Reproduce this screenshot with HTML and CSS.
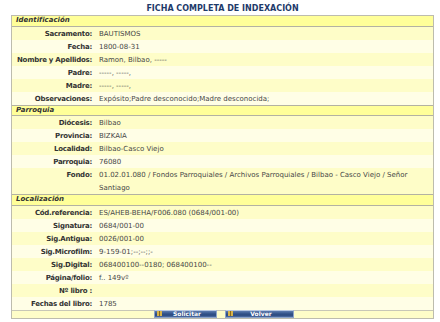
FILE: index.html
```html
<!DOCTYPE html>
<html lang="es">
<head>
<meta charset="utf-8">
<title>Ficha completa de indexación</title>
<link rel="stylesheet" href="styles.css">
</head>
<body>
<div class="page">
  <h1 class="title">FICHA COMPLETA DE INDEXACIÓN</h1>
  <table class="ficha">
    <colgroup>
      <col class="c-label">
      <col class="c-value">
    </colgroup>
    <tbody>
      <tr class="sec first"><td colspan="2">Identificación</td></tr>
      <tr class="r1"><th>Sacramento:</th><td>BAUTISMOS</td></tr>
      <tr class="r2"><th>Fecha:</th><td>1800-08-31</td></tr>
      <tr class="r1"><th>Nombre y Apellidos:</th><td>Ramon, Bilbao, -----</td></tr>
      <tr class="r2"><th>Padre:</th><td>-----, -----,</td></tr>
      <tr class="r1"><th>Madre:</th><td>-----, -----,</td></tr>
      <tr class="r2"><th>Observaciones:</th><td>Expósito;Padre desconocido;Madre desconocida;</td></tr>
      <tr class="sec"><td colspan="2">Parroquia</td></tr>
      <tr class="r1"><th>Diócesis:</th><td>Bilbao</td></tr>
      <tr class="r2"><th>Provincia:</th><td>BIZKAIA</td></tr>
      <tr class="r1"><th>Localidad:</th><td>Bilbao-Casco Viejo</td></tr>
      <tr class="r2"><th>Parroquia:</th><td>76080</td></tr>
      <tr class="r1 tall"><th>Fondo:</th><td>01.02.01.080 / Fondos Parroquiales / Archivos Parroquiales / Bilbao - Casco Viejo / Señor Santiago</td></tr>
      <tr class="sec"><td colspan="2">Localización</td></tr>
      <tr class="r1"><th>Cód.referencia:</th><td>ES/AHEB-BEHA/F006.080 (0684/001-00)</td></tr>
      <tr class="r2"><th>Signatura:</th><td>0684/001-00</td></tr>
      <tr class="r1"><th>Sig.Antigua:</th><td>0026/001-00</td></tr>
      <tr class="r2"><th>Sig.Microfilm:</th><td>9-159-01;--;--;;-</td></tr>
      <tr class="r1"><th>Sig.Digital:</th><td>068400100--0180; 068400100--</td></tr>
      <tr class="r2"><th>Página/folio:</th><td>f.. 149vº</td></tr>
      <tr class="r1"><th>Nº libro :</th><td></td></tr>
      <tr class="r2"><th>Fechas del libro:</th><td>1785</td></tr>
      <tr class="btns">
        <td colspan="2">
          <div class="btnbar">
            <button class="btn btn-sol" type="button"><span class="ico"></span>Solicitar</button>
            <button class="btn btn-vol" type="button"><span class="ico"></span>Volver</button>
          </div>
        </td>
      </tr>
    </tbody>
  </table>
</div>
</body>
</html>
```
FILE: styles.css
```css
html, body {
  margin: 0;
  padding: 0;
  background: #ffffff;
}

body {
  font-family: "DejaVu Sans", Verdana, sans-serif;
  font-size: 7px;
  color: #474747;
}

.page {
  padding: 0 6px 0 11px;
}

.title {
  margin: 0;
  height: 15px;
  line-height: 17px;
  font-size: 8px;
  font-weight: bold;
  text-align: center;
  color: #1e3a6a;
  width: 423px;
}

.ficha {
  width: 423px;
  border-collapse: separate;
  border-spacing: 0;
  border: 1px solid #bdbcae;
  table-layout: fixed;
}

.c-label { width: 84px; }
.c-value { width: auto; }

.ficha th,
.ficha td {
  padding: 0;
  vertical-align: top;
}

.ficha tr.r1,
.ficha tr.r2 {
  height: 13px;
}

.ficha tr.r1 { background: #fefdc8; }
.ficha tr.r2 { background: #fffee6; }

.ficha tr.r1 th,
.ficha tr.r1 td,
.ficha tr.r2 th,
.ficha tr.r2 td {
  padding-top: 1px;
  line-height: 12px;
}

.ficha th {
  padding-right: 4px;
  text-align: right;
  font-weight: bold;
  color: #333333;
  white-space: nowrap;
  letter-spacing: -0.25px;
}

.ficha td {
  padding-left: 3px;
}

.ficha tr.tall th,
.ficha tr.tall td {
  line-height: 12.5px;
}

.ficha tr.sec {
  height: 11.5px;
  background: #ffff99;
}

.ficha tr.sec.first {
  height: 10.5px;
}

.ficha tr.sec td {
  border-top: 1px solid #b3b2a2;
  border-bottom: 1px solid #b3b2a2;
  padding: 0 0 0 4px;
  font-weight: bold;
  font-style: italic;
  color: #333333;
  line-height: 9.5px;
  vertical-align: middle;
}

.ficha tr.sec.first td {
  border-top: 0;
}

.ficha tr.btns {
  height: 8px;
  background: #fefdc8;
}

.ficha tr.btns td {
  border-top: 1px solid #c8c7b6;
  padding: 0;
  line-height: 7px;
  vertical-align: middle;
}

.btnbar {
  display: flex;
  justify-content: center;
  align-items: center;
  gap: 8px;
  padding-left: 2px;
  height: 7px;
}

.btn {
  position: relative;
  display: block;
  box-sizing: border-box;
  height: 8px;
  padding: 0 0 0 4px;
  margin: 0;
  border: 1px solid #8ea4c8;
  border-top-color: #b9c8e0;
  background: linear-gradient(#5d7cb0, #34548a 45%, #2b4a80 70%, #4f6fa4);
  color: #ffffff;
  font-family: "DejaVu Sans", Verdana, sans-serif;
  font-size: 6px;
  font-weight: bold;
  line-height: 6px;
  text-align: center;
  overflow: hidden;
}

.btn-sol { width: 63px; }
.btn-vol { width: 69px; }

.ico {
  position: absolute;
  left: 2px;
  top: 0;
  width: 5px;
  height: 5px;
  background: linear-gradient(90deg, #d8b44a 0 2px, #8a6a20 2px 3px, #d8b44a 3px 5px);
}
```
